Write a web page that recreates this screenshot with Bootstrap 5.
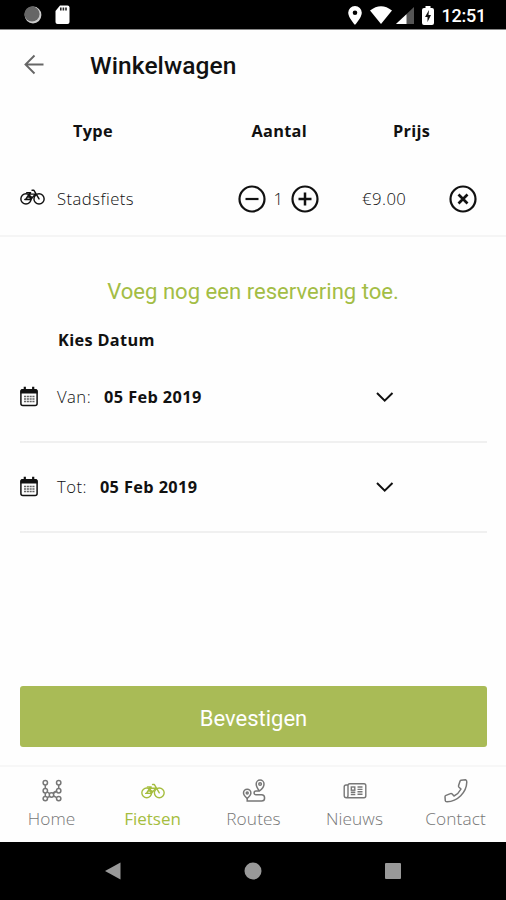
<!DOCTYPE html>
<html lang="nl">
<head>
<meta charset="utf-8">
<meta name="viewport" content="width=device-width, initial-scale=1">
<title>Winkelwagen</title>
<link href="https://cdn.jsdelivr.net/npm/bootstrap@5.3.0/dist/css/bootstrap.min.css" rel="stylesheet">
<style>
body{font-family:"Open Sans",sans-serif;font-size:16.7px;line-height:24px;color:#111;background:#fefefe}
svg{display:block;flex:none}
.screen{height:900px}
.rb{font-family:Roboto,sans-serif}
.status{height:30px;background:#000;border-bottom:1px solid #888;padding:1px 20px 0 24px}
.sdcard{margin-left:8px}
.battery{margin-left:8px}
.clock{font-size:18px;font-weight:500;padding-top:2px;letter-spacing:-.25px}
.topbar{height:70px;padding-left:22px}
.topbar h1{font-size:24.5px;font-weight:500;margin:2px 0 0 44px;letter-spacing:.1px}
.cart{display:grid;grid-template-columns:57px 181px 124px 87px 1fr;align-items:center}
.heads{height:62px;font-weight:700;font-size:16.3px;letter-spacing:.3px}
.h-type{padding-left:16px}
.h-count{padding-left:13.5px}
.h-price{padding-left:31px}
.item{height:75px;border-bottom:2px solid #f5f5f5}
.cart-bike{margin:0 0 3px 20px}
.light{font-weight:300;color:#111;letter-spacing:.45px}
.count{width:25px;text-align:center}
.green{color:#a3bd45}
.more{font-size:22.1px;padding-top:41px;line-height:26px}
.pick{font-size:16.3px;margin:24px 0 1px 58px;letter-spacing:.35px}
.date-row{height:90px;border-bottom:2px solid #f0f0f0;margin:0 19px 0 20px;padding-bottom:1px;display:grid;grid-template-columns:37px 319px 1fr;align-items:center}
.date-row b{margin-left:13px;font-size:16.3px;letter-spacing:.4px}
.confirm{height:61px;margin:0 19px 18px 20px;background:#a9bb56;border-radius:3px;font-size:22px;color:#fff}
.confirm span{display:block;padding-top:4px}
.tabs{height:77px;border-top:2px solid #f7f7f7;padding:12px 0 0 1px}
.tab{flex:1;color:#777;font-size:17.3px;font-weight:300}
.tab span{margin-top:4px;letter-spacing:.1px}
.tab.on{color:#a5bd3e;font-weight:400;font-size:17px}
.tab.on span{letter-spacing:0}
.sys{height:58px;background:#000}
.sys .key{flex:0 0 140px;display:flex;justify-content:center}
</style>
</head>
<body>
<svg width="0" height="0" class="position-absolute">
<symbol id="bike" viewBox="0 0 26 18"><g fill="none" stroke="currentColor" stroke-width="1.500" stroke-linecap="round" stroke-linejoin="round"><circle cx="6.200" cy="11" r="5.300"/><circle cx="19.800" cy="11" r="5.300"/><path d="M6.200 11 9.500 6H16l-5 5.800zM9.500 6l1.500 5.800M7 4.600h4M5 11.600h6M19.800 11 14.500 2H12.500M8 9h4"/></g></symbol>
<symbol id="cal" viewBox="0 0 18 21"><rect x=".9" y="3.800" width="16.200" height="15.700" rx="2" fill="none" stroke="currentColor" stroke-width="1.500"/><path d="M.5 7.500V5q0-2 2-2h13q2 0 2 2v2.500z" fill="currentColor"/><path d="M4.800 .7v4M13.200 .7v4" stroke="currentColor" stroke-width="2.200"/><path d="M4 10.500h10.500M4 13h10.500M4 15.500h10.500" stroke="currentColor" stroke-width="1.700" stroke-dasharray="2.100 .7" opacity=".65"/></symbol>
</svg>
<main class="screen d-flex flex-column">
<div class="status d-flex align-items-center text-white">
<svg width="18" height="18" viewBox="0 0 18 18"><circle cx="9" cy="9" r="8.400" fill="#ccc"/><circle cx="8" cy="8" r="7.600" fill="#666"/></svg>
<svg class="sdcard" width="22" height="20" viewBox="0 0 22 20"><path d="M10 .5h7.500q2 0 2 2v14.500q0 2-2 2h-10q-2 0-2-2V6z" fill="#fff"/><path d="M10.800 2.500v3M13.400 2.500v3M16 2.500v3" stroke="#222" stroke-width="1.600"/></svg>
<svg class="ms-auto" width="14" height="19" viewBox="0 0 14 19"><path fill="#fff" fill-rule="evenodd" d="M7 0a6.800 6.800 0 0 0-6.800 6.800C.2 11.500 7 19 7 19s6.800-7.500 6.800-12.200A6.800 6.800 0 0 0 7 0zM7 4.500a2.300 2.300 0 1 1 0 4.600 2.300 2.300 0 0 1 0-4.600z"/></svg>
<svg class="ms-2" width="22" height="18" viewBox="0 0 22 18"><path d="M0 4.500Q11-4 22 4.500L11 18z" fill="#fff"/></svg>
<svg class="ms-1" width="18" height="17" viewBox="0 0 18 17"><path d="M18 0v17H0z" fill="#555"/><path d="M10.500 7.200V17H0z" fill="#fff"/></svg>
<svg class="battery" width="12" height="19" viewBox="0 0 12 19"><path d="M3.500 0h5v2H10q2 0 2 2v13q0 2-2 2H2q-2 0-2-2V4q0-2 2-2h1.500z" fill="#fff"/><path d="M7 4 3 11h2.500v5L9 9H6.500z" fill="#111"/></svg>
<span class="clock rb ms-2">12:51</span>
</div>
<header class="topbar d-flex align-items-center">
<svg width="24" height="24" viewBox="0 0 24 24" fill="none" stroke="#666" stroke-width="1.900"><path d="M21.500 11.500H3.500M12.500 2.500l-9 9 9 9"/></svg>
<h1 class="rb">Winkelwagen</h1>
</header>
<section>
<div class="cart heads"><i></i><span class="h-type">Type</span><span class="h-count">Aantal</span><span class="h-price">Prijs</span></div>
<div class="cart item">
<svg class="cart-bike" width="25" height="18"><use href="#bike"/></svg>
<span class="light">Stadsfiets</span>
<div class="d-flex align-items-center">
<svg width="28" height="28" viewBox="0 0 28 28" fill="none" stroke="#111" stroke-width="2.200"><circle cx="14" cy="14" r="12.500"/><path d="M7.500 14h13"/></svg>
<span class="light count">1</span>
<svg width="28" height="28" viewBox="0 0 28 28" fill="none" stroke="#111" stroke-width="2.200"><circle cx="14" cy="14" r="12.500"/><path d="M7.500 14h13M14 7.500v13" stroke-width="2.500"/></svg>
</div>
<span class="light">€9.00</span>
<svg width="28" height="28" viewBox="0 0 28 28" fill="none" stroke="#111" stroke-width="2.200"><circle cx="14" cy="14" r="12.500"/><path d="m9.500 9.500 9 9m0-9-9 9" stroke-width="2.700"/></svg>
</div>
</section>
<div class="more rb green text-center">Voeg nog een reservering toe.</div>
<div class="pick fw-bold">Kies Datum</div>
<div class="date-row"><svg width="18" height="21"><use href="#cal"/></svg><div><span class="light">Van:</span><b>05 Feb 2019</b></div><svg width="18" height="12" viewBox="0 0 18 12" fill="none" stroke="#111" stroke-width="2"><path d="m1 2 7.700 7.700L16.500 2"/></svg></div>
<div class="date-row"><svg width="18" height="21"><use href="#cal"/></svg><div><span class="light">Tot:</span><b>05 Feb 2019</b></div><svg width="18" height="12" viewBox="0 0 18 12" fill="none" stroke="#111" stroke-width="2"><path d="m1 2 7.700 7.700L16.500 2"/></svg></div>
<button class="btn confirm rb mt-auto p-0"><span>Bevestigen</span></button>
<nav class="tabs d-flex">
<div class="tab d-flex flex-column align-items-center"><svg width="24" height="24" viewBox="0 0 24 24" fill="none" stroke="currentColor" stroke-width="1.500"><circle cx="5.300" cy="3.800" r="2.200"/><circle cx="18.700" cy="3.800" r="2.200"/><circle cx="5.300" cy="11.700" r="2.200"/><circle cx="18.700" cy="11.700" r="2.200"/><circle cx="5.300" cy="19.600" r="2.200"/><circle cx="18.700" cy="19.600" r="2.200"/><circle cx="11.500" cy="16" r="2.200"/><path d="M5.300 6v3.500M18.700 6v3.500M5.300 14v3.500M7.300 13l2.400 1.600M13.200 14.600l3.600-2.400M7.500 18.500l2.200-1.200M12.800 14l3-2M13.700 17l3 1.600"/></svg><span>Home</span></div>
<div class="tab on d-flex flex-column align-items-center"><svg width="24" height="24"><use href="#bike"/></svg><span>Fietsen</span></div>
<div class="tab d-flex flex-column align-items-center"><svg width="24" height="24" viewBox="0 0 24 24" fill="none" stroke="currentColor" stroke-width="1.500"><path d="M17.500 12C15.500 9.500 14.200 7.300 14.200 5a3.900 3.900 0 0 1 7.800 0c0 2.800-2 5.200-4.500 7H14a1.800 1.800 0 0 0 0 3.800h5.500a3 3 0 0 1 0 6.200H5.200v-3.500"/><path d="M5.200 19.500C3 17.500 1.500 15.900 1.500 14a3.700 3.700 0 0 1 7.400 0c0 1.900-1.500 3.500-3.700 5.500z"/><circle cx="18.100" cy="5" r="1.300"/><circle cx="5.200" cy="14" r="1"/></svg><span>Routes</span></div>
<div class="tab d-flex flex-column align-items-center"><svg width="24" height="24" viewBox="0 0 24 24" fill="none" stroke="currentColor" stroke-width="1.400"><path d="M5 6H3Q1.200 6 1.200 8v8.500q0 2.300 2.300 2.300H21q1.800 0 1.800-2V6.500q0-1.800-1.800-1.800H6.800q-1.800 0-1.800 1.800v10q0 2.300-1.800 2.300"/><rect x="8.300" y="8" width="3.500" height="3.200"/><path d="M14.500 8h5M14.500 10.400h5M14.500 12.800h5M14.500 15.200h5M7.800 13.200h4.500M7.800 15.500h4.500"/></svg><span>Nieuws</span></div>
<div class="tab d-flex flex-column align-items-center"><svg width="24" height="24" viewBox="0 0 24 24" fill="none" stroke="currentColor" stroke-width="1.500" stroke-linejoin="round"><path d="M17 1.200 21.500 .8Q22.800 1 22.800 3C22.500 13.500 13.500 22.500 3 22.800Q1.400 22.800 1.300 21.700L1 17.800Q1 16.800 2 16.400L6.500 14.600Q7.500 14.300 8.200 15L10 17C13 15.500 15.500 13 17 10L15 8.200Q14.300 7.500 14.600 6.500L16 2.300Q16.300 1.400 17 1.200z"/></svg><span>Contact</span></div>
</nav>
<div class="sys d-flex align-items-center justify-content-center">
<div class="key"><svg width="16" height="18" viewBox="0 0 16 18"><path d="M15.500 .5v17L0 9z" fill="#999"/></svg></div>
<div class="key"><svg width="18" height="18" viewBox="0 0 18 18"><circle cx="9" cy="9" r="8.500" fill="#999"/></svg></div>
<div class="key"><svg width="16" height="16" viewBox="0 0 16 16"><rect width="16" height="16" rx="1" fill="#999"/></svg></div>
</div>
</main>
<script src="https://cdn.jsdelivr.net/npm/bootstrap@5.3.0/dist/js/bootstrap.bundle.min.js"></script>
</body>
</html>
